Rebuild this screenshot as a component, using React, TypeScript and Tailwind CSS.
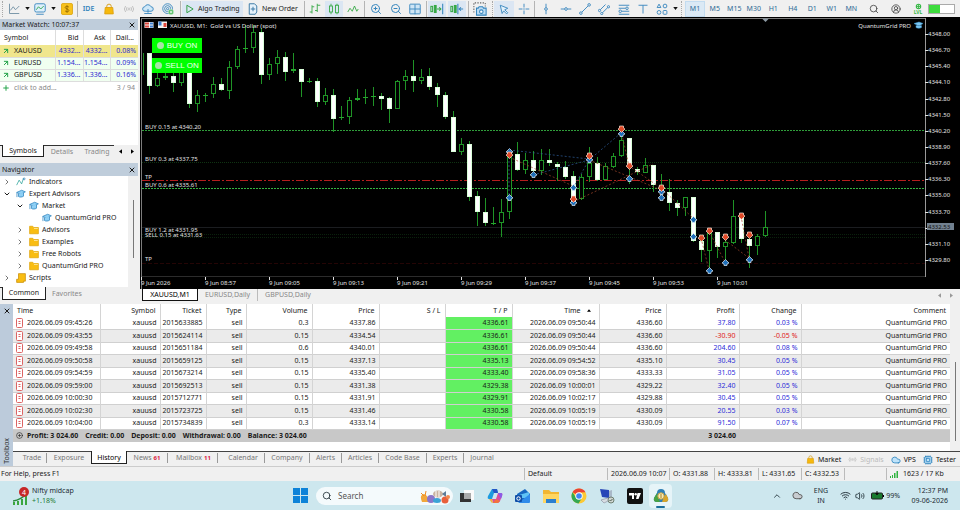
import React from "react";
import {
  ChevronDown, ChevronRight, ChevronUp, CircleUserRound, Cloud,
  Cpu, Search, Volume2, Wifi, X, ZoomIn, ZoomOut, CirclePlus, Plus, ArrowUpRight,
} from "lucide-react";

type Kids = { children?: React.ReactNode };

function Glyph({ children, size = "size-3" }: Kids & { size?: string }) {
  return (
    <svg viewBox="0 0 16 16" className={`${size} shrink-0`} fill="none" stroke="currentColor" strokeWidth="1.2" aria-hidden="true">
      {children}
    </svg>
  );
}

function Tool({ label, w, on, color = "text-[#3585bd]", children }: Kids & { label: string; w: string; on?: boolean; color?: string }) {
  return (
    <button aria-label={label} className={`${w} ${color} ${on ? "bg-[#dbe6f3]" : ""} flex h-4 shrink-0 items-center justify-center`}>
      {children}
    </button>
  );
}

const Sep = ({ w }: { w: string }) => (
  <span className={`${w} flex shrink-0 justify-center`}><span className="h-4 w-px bg-[#b4b4b4]" /></span>
);
const Grip = ({ w }: { w: string }) => (
  <span className={`${w} flex shrink-0 justify-center`}><span className="h-4 border-l border-dotted border-[#a8a8a8]" /></span>
);
const Caret = () => (
  <button aria-label="More options" className="flex h-4 w-[6px] shrink-0 items-center justify-center">
    <svg viewBox="0 0 6 4" className="h-[3px] w-[5px]" aria-hidden="true"><path d="M0 0h6L3 4z" fill="#111" /></svg>
  </button>
);

function Bag({ size = "size-3" }: { size?: string }) {
  return (
    <Glyph size={size}>
      <path d="M5 7V4.500a3 3 0 0 1 6 0V7" stroke="#d49a10" />
      <path d="M3 6h10l.7 8.500H2.300z" fill="#f6b90d" stroke="#dca011" />
    </Glyph>
  );
}
function Signal({ size = "size-3" }: { size?: string }) {
  return (
    <Glyph size={size}>
      <circle cx="8" cy="8" r="1.300" />
      <path d="M5.500 5.500a3.500 3.500 0 0 0 0 5M10.500 5.500a3.500 3.500 0 0 1 0 5M3.500 4a6 6 0 0 0 0 8M12.500 4a6 6 0 0 1 0 8" />
    </Glyph>
  );
}

const timeframes = ["M5", "M15", "M30", "H1", "H4", "D1", "W1", "MN"];

function Toolbar() {
  return (
    <header className="flex h-[17px] items-center bg-[#f0f0f0] text-[8px] leading-4 text-[#222]">
      <Grip w="w-1" />
      <Tool label="Chart type" w="w-5" color="text-[#6f8fa3]">
        <Glyph><path d="M2 1v13h13M3 10l4-5 3 4 5-5" /></Glyph>
      </Tool>
      <Caret />
      <Tool label="Templates" w="w-5">
        <Glyph>
          <rect x="1" y="1" width="14" height="11" rx="2" fill="#dff0fb" />
          <path d="M3 9l3-4 3 3 4-4" stroke="#2da44e" /><path d="M3 15h10" />
        </Glyph>
      </Tool>
      <Caret />
      <Tool label="Deposit" w="w-[21px]">
        <Glyph>
          <rect x="0.600" y="0.600" width="14.800" height="14.800" rx="2" fill="#f8c11c" stroke="#dda714" />
          <path d="M10.500 5.500c-1-1.500-5-1.500-5 .500s5 1.800 5 4-4 2-5 .500M8 3v10" stroke="#966b00" />
        </Glyph>
      </Tool>
      <Sep w="w-px" />
      <Tool label="MetaEditor" w="w-[21px]"><span className="text-[7px] font-semibold">IDE</span></Tool>
      <Tool label="Market" w="w-5"><Bag /></Tool>
      <Tool label="Signals" w="w-[19px]" color="text-[#bdbdbd]"><Signal /></Tool>
      <Tool label="Virtual hosting" w="w-[19px]">
        <Glyph><path d="M5 11H4a3 3 0 0 1-.300-6A4.500 4.500 0 0 1 12 5a3 3 0 0 1 0 6H5" fill="#cfe8f8" /><path d="M8 8v5M3 14h10" /></Glyph>
      </Tool>
      <Tool label="Copy network" w="w-[22px]">
        <Glyph>
          <circle cx="7.500" cy="7.500" r="6.500" /><circle cx="7.500" cy="7.500" r="4" /><circle cx="7.500" cy="7.500" r="1.500" />
          <circle cx="12" cy="12" r="3.600" fill="#39b54a" stroke="#fff" strokeWidth=".6" /><path d="M12 10v4M10 12h4" stroke="#fff" />
        </Glyph>
      </Tool>
      <Sep w="w-[3px]" />
      <button className="flex h-4 w-[61px] shrink-0 items-center gap-[3px] bg-[#dbe6f3] pl-[3px]">
        <Glyph size="size-2.5"><path d="M3 2l10 6-10 6z" stroke="#2a9d3f" strokeWidth="1.500" /></Glyph>
        <span className="whitespace-nowrap text-[7px]">Algo Trading</span>
      </button>
      <button className="flex h-4 w-[60px] shrink-0 items-center gap-[3px] pl-1 text-[7px]">
        <Glyph><path d="M3 1h7l3 3v8l-2 3H3z" fill="#e6f2fb" stroke="#2f6f9f" /><path d="M8 5v6M5 8h6" stroke="#2f6f9f" /></Glyph>
        <span className="whitespace-nowrap">New Order</span>
      </button>
      <Sep w="w-[2px]" />
      <Tool label="Bar chart" w="w-5" color="text-[#35a845]">
        <Glyph><path d="M4 3v11M1 12h3M4 5h3M11 1v11M8 10h3M11 3h4" /></Glyph>
      </Tool>
      <Tool label="Candlesticks" w="w-[18px]" on color="text-[#35a845]">
        <Glyph><rect x="2" y="4" width="4" height="8" /><rect x="10" y="3" width="4" height="10" /><path d="M4 1v3M4 12v3M12 1v2M12 13v2" /></Glyph>
      </Tool>
      <Tool label="Line chart" w="w-5" color="text-[#35a845]"><Glyph><path d="M1 12l3-5 3 4 3-7 3 7 2-3" /></Glyph></Tool>
      <Sep w="w-[3px]" />
      <Tool label="Zoom in" w="w-5"><ZoomIn className="size-3" /></Tool>
      <Tool label="Zoom out" w="w-[19px]"><ZoomOut className="size-3" /></Tool>
      <Tool label="Tile windows" w="w-5">
        <Glyph><rect x="1" y="1.500" width="14" height="13" rx="1" fill="#cfe5f5" /><path d="M8 2v13M1 8h14" /></Glyph>
      </Tool>
      <Sep w="w-[3px]" />
      <Tool label="Auto scroll" w="w-[18px]" on color="text-[#35a845]">
        <Glyph size="size-3.5"><rect x="1" y="5" width="2" height="6" /><rect x="5" y="4" width="2" height="8" fill="#35a845" /><path d="M8 8h4M10.500 6l2 2-2 2" /><path d="M14.500 2v12" stroke="#3585bd" /></Glyph>
      </Tool>
      <span className="w-0.5 shrink-0" />
      <Tool label="Chart shift" w="w-[18px]" on color="text-[#35a845]">
        <Glyph size="size-3.5"><rect x="1" y="5" width="2" height="6" /><rect x="5" y="4" width="2" height="8" fill="#35a845" /><path d="M9 2v12M15 8h-4M12.500 6l-2 2 2 2" stroke="#3585bd" /></Glyph>
      </Tool>
      <Sep w="w-1" />
      <Tool label="Screenshot" w="w-5">
        <Glyph size="size-3.5">
          <path d="M1 12V1h13v4" stroke="#666" strokeDasharray="1.500 1.500" />
          <path d="M4 7h2l1-1.500h4L12 7h3v8H4z" fill="#bcdcf3" /><circle cx="9.500" cy="11" r="2" fill="#fff" />
        </Glyph>
      </Tool>
      <Grip w="w-1" />
      <Tool label="Cursor" w="w-5" on><Glyph><path d="M3 3l10 4-4 2 4 4-1.500 1.500-4-4-2 3.500z" fill="#e3f1fb" /></Glyph></Tool>
      <Tool label="Crosshair" w="w-[19px]"><Glyph><path d="M8 1v5M8 10v5M1 8h5M10 8h5M7 8h2" /></Glyph></Tool>
      <Sep w="w-[3px]" />
      <Tool label="Vertical line" w="w-5"><Glyph><path d="M8 1v5M8 10v5" /><circle cx="8" cy="8" r="1.800" /></Glyph></Tool>
      <Tool label="Horizontal line" w="w-[19px]"><Glyph><path d="M1 8h5M10 8h5" /><circle cx="8" cy="8" r="1.800" /></Glyph></Tool>
      <Tool label="Trend line" w="w-[19px]"><Glyph><path d="M4 12L12 4" /><circle cx="2.500" cy="13.500" r="1.700" /><circle cx="13.500" cy="2.500" r="1.700" /></Glyph></Tool>
      <Tool label="Channel" w="w-5"><Glyph><path d="M3 9l7-7M6 13l7-7" /><circle cx="2" cy="10" r="1.500" /><circle cx="14" cy="5" r="1.500" /><circle cx="5" cy="14" r="1.500" /></Glyph></Tool>
      <Tool label="Fibonacci" w="w-5"><Glyph><path d="M1 3h14M1 7h9M5 11h10M1 15h14" /><circle cx="12" cy="7" r="1.700" /><circle cx="3" cy="11" r="1.700" /></Glyph></Tool>
      <Tool label="Text" w="w-[18px]"><Glyph><path d="M2 3h12M8 3v11" /></Glyph></Tool>
      <Tool label="Shapes" w="w-5">
        <Glyph><path d="M1.500 6L4 1.500 6.500 6z" /><circle cx="12" cy="4" r="2.500" /><rect x="9.500" y="10" width="5" height="5" rx="1" /><circle cx="4" cy="12.500" r="2.500" /></Glyph>
      </Tool>
      <Caret />
      <Grip w="w-[7px]" />
      <button className="h-4 w-5 shrink-0 border border-[#c3dcf0] bg-[#dbe9f5] text-[7px] leading-[14px] text-[#2e6b96]">M1</button>
      <nav aria-label="Timeframes" className="flex w-[156px] shrink-0">
        {timeframes.map((t) => (
          <button key={t} className="flex-1 text-center text-[7px] text-[#2e6b96]">{t}</button>
        ))}
      </nav>
      <div className="ml-auto flex items-center pr-[5px]">
        <Tool label="Search" w="w-5" color="text-[#444]"><Search className="size-[10px]" /></Tool>
        <Tool label="Account" w="w-6" color="text-[#444]"><CircleUserRound className="size-[10px]" /></Tool>
        <Tool label="Level" w="w-5" color="text-[#35b845]">
          <span className="flex flex-col items-center">
            <Glyph size="size-[7px]"><circle cx="8" cy="8" r="5" strokeWidth="2.500" /><path d="M8 3v10M3 8h10" strokeWidth="2" /></Glyph>
            <span className="text-[5px] leading-[5px] font-bold">LVL</span>
          </span>
        </Tool>
        <span className="flex h-[10px] w-[27px] border border-[#aaa] bg-white"><span className="w-[11px] bg-[#3ddc3d]" /></span>
      </div>
    </header>
  );
}

const quotes = [
  { s: "XAUUSD", bid: "4332...", ask: "4332...", d: "0.08%", row: "bg-[#f0e68c]" },
  { s: "EURUSD", bid: "1.154...", ask: "1.154...", d: "0.09%", row: "bg-[#f0fff0]" },
  { s: "GBPUSD", bid: "1.336...", ask: "1.336...", d: "0.16%", row: "bg-[#f0fff0]" },
];

function PanelTitle({ children, h }: Kids & { h: string }) {
  return (
    <div className={`${h} flex shrink-0 items-center justify-between bg-[#bfcddb] pr-0.5 pl-0.5`}>
      <h2 className="leading-none">{children}</h2>
      <button aria-label="Close panel"><X className="size-2" strokeWidth={3} /></button>
    </div>
  );
}

function MarketWatch() {
  return (
    <section className="flex h-[138px] flex-col bg-white">
      <PanelTitle h="h-[11px]">Market Watch: 10:07:37</PanelTitle>
      <table className="w-full table-fixed border-collapse">
        <colgroup><col className="w-[55px]" /><col className="w-7" /><col className="w-[27px]" /><col /></colgroup>
        <thead>
          <tr className="h-[15px]">
            <th className="border-r border-[#ddd] pl-1 text-left font-normal">Symbol</th>
            <th className="border-r border-[#ddd] pr-1 text-right font-normal">Bid</th>
            <th className="border-r border-[#ddd] pr-1 text-right font-normal">Ask</th>
            <th className="pr-1 text-right font-normal">Dail...</th>
          </tr>
        </thead>
        <tbody>
          {quotes.map((q) => (
            <tr key={q.s} className={`${q.row} h-[12px] border-b border-[#ddd] text-[#2b2bd0]`}>
              <td className="border-r border-[#ddd] pl-0.5 text-[#222]">
                <span className="flex items-center gap-1"><ArrowUpRight className="size-2 text-[#24a34a]" strokeWidth={3} />{q.s}</span>
              </td>
              <td className="border-r border-[#ddd] pr-0.5 text-right">{q.bid}</td>
              <td className="border-r border-[#ddd] pr-0.5 text-right">{q.ask}</td>
              <td className="pr-0.5 text-right">{q.d}</td>
            </tr>
          ))}
        </tbody>
      </table>
      <div className="flex h-3 items-center pr-[3px] pl-0.5 text-[#888]">
        <button className="flex items-center gap-1"><Plus className="size-2 text-[#24a34a]" strokeWidth={3} />click to add...</button>
        <span className="ml-auto">3 / 94</span>
      </div>
      <div className="mt-auto flex h-3 items-center bg-[#f0f0f0]">
        <span className="h-full w-0.5 border-t border-[#333]" />
        <button className="h-full w-[42px] border border-t-0 border-[#222] bg-white leading-[11px]">Symbols</button>
        <button className="h-full w-9 border-t border-[#333] leading-[11px] text-[#888]">Details</button>
        <button className="h-full w-[34px] border-t border-[#333] leading-[11px] text-[#888]">Trading</button>
        <button aria-label="Previous tabs" className="flex w-3 justify-center"><svg viewBox="0 0 4 6" className="h-[5px] w-[3px]"><path d="M4 0v6L0 3z" /></svg></button>
        <button aria-label="Next tabs" className="flex w-3 justify-center"><svg viewBox="0 0 4 6" className="h-[5px] w-[3px]"><path d="M0 0v6l4-3z" /></svg></button>
      </div>
    </section>
  );
}

function Cap({ size = "size-[10px]" }: { size?: string }) {
  return (
    <Glyph size={size}>
      <path d="M1 5.500L9 2l6 2.500-7.500 4z" fill="#8fd0f5" stroke="#2d83bd" />
      <path d="M4 7.500V12c2 1.500 6 1 8-.500V6M1.500 6v7" fill="#8fd0f5" stroke="#2d83bd" />
    </Glyph>
  );
}
function Folder() {
  return (
    <Glyph size="size-[10px]">
      <path d="M1 2h5l1.500 2H15v10H1z" fill="#f9bd12" stroke="#e0a50c" /><path d="M8 5.500h6" stroke="#fff2c0" />
    </Glyph>
  );
}

type Node = { t: string; pad: string; open?: boolean; leaf?: boolean; icon: "ind" | "cap" | "dir" | "scr" };
const tree: Node[] = [
  { t: "Indicators", pad: "pl-[3px]", icon: "ind" },
  { t: "Expert Advisors", pad: "pl-[3px]", open: true, icon: "cap" },
  { t: "Market", pad: "pl-4", open: true, icon: "cap" },
  { t: "QuantumGrid PRO", pad: "pl-[29px]", leaf: true, icon: "cap" },
  { t: "Advisors", pad: "pl-4", icon: "dir" },
  { t: "Examples", pad: "pl-4", icon: "dir" },
  { t: "Free Robots", pad: "pl-4", icon: "dir" },
  { t: "QuantumGrid PRO", pad: "pl-4", icon: "dir" },
  { t: "Scripts", pad: "pl-[3px]", icon: "scr" },
];

function Navigator() {
  return (
    <section className="mt-[6px] flex h-[137px] flex-col bg-white">
      <PanelTitle h="h-[13px]">Navigator</PanelTitle>
      <div className="flex flex-1">
        <ul className="flex-1">
          {tree.map((n, i) => (
            <li key={i} className={n.pad}>
              <button className="flex h-3 items-center text-[7px] whitespace-nowrap">
                <span className="flex w-[13px]">
                  {n.leaf ? null : n.open ? <ChevronDown className="size-2" strokeWidth={3} /> : <ChevronRight className="size-2 text-[#777]" strokeWidth={3} />}
                </span>
                {n.icon === "ind" && <Glyph size="size-[10px]"><path d="M1 13l4-8 4 6 3-9" stroke="#2aa198" /><circle cx="13" cy="3" r="1.500" stroke="#3585bd" /></Glyph>}
                {n.icon === "cap" && <Cap />}
                {n.icon === "dir" && <Folder />}
                {n.icon === "scr" && <Glyph size="size-[10px]"><path d="M4 1h11v12h-3v2H1v-5h3z" fill="#f9bd12" stroke="#c98f08" /></Glyph>}
                <span className="pl-[3px]">{n.t}</span>
              </button>
            </li>
          ))}
        </ul>
        <div className="flex w-[10px] justify-center bg-[#f0f0f0] pt-6"><span className="h-[58px] w-px bg-[#777]" /></div>
      </div>
      <div className="flex h-[13px] bg-[#f0f0f0]">
        <span className="w-0.5 border-t border-[#333]" />
        <button className="w-11 border border-t-0 border-[#222] bg-white leading-[12px]">Common</button>
        <button className="w-[42px] leading-[12px] text-[#888]">Favorites</button>
      </div>
    </section>
  );
}

// high, body top, body bottom, low, 1 = falling (filled) candle
const candles: number[][] = [
  [53, 53, 86, 94, 1], [73, 78, 86, 87, 0], [73, 76, 78, 80, 0], [73, 76, 83, 92, 1], [60, 66, 83, 86, 0], [70, 70, 104, 108, 1],
  [90, 95, 104, 112, 0], [93, 95, 96, 102, 0], [77, 84, 94, 98, 0], [78, 84, 90, 91, 1], [61, 67, 91, 99, 0], [46, 49, 67, 69, 0],
  [25, 48, 49, 53, 0], [25, 32, 48, 53, 0], [28, 32, 75, 84, 1], [58, 64, 75, 80, 0], [50, 57, 64, 74, 0], [52, 57, 72, 81, 1],
  [53, 69, 71, 73, 0], [69, 69, 82, 97, 1], [78, 81, 82, 83, 0], [78, 81, 102, 107, 1], [88, 95, 102, 105, 0], [89, 95, 119, 132, 1],
  [106, 117, 118, 120, 0], [97, 100, 117, 124, 0], [89, 98, 100, 101, 0], [89, 97, 98, 104, 0], [87, 96, 97, 106, 0],
  [93, 96, 99, 110, 1], [97, 98, 109, 123, 1], [80, 81, 109, 109, 0], [70, 76, 81, 90, 0], [60, 76, 81, 92, 1], [69, 77, 81, 84, 0],
  [68, 76, 87, 90, 1], [83, 87, 95, 107, 1], [92, 95, 117, 119, 1], [111, 117, 152, 152, 1], [138, 144, 152, 155, 0],
  [141, 144, 197, 201, 1], [191, 196, 212, 226, 1], [198, 212, 223, 226, 1], [207, 223, 224, 225, 0], [199, 212, 223, 237, 0],
  [153, 157, 212, 219, 0], [142, 154, 170, 171, 1], [153, 160, 170, 174, 0], [151, 160, 171, 175, 1], [149, 160, 171, 175, 0],
  [149, 160, 163, 166, 1], [162, 164, 167, 181, 1], [161, 167, 177, 179, 1], [171, 176, 202, 203, 1], [174, 177, 199, 200, 0],
  [147, 163, 177, 182, 0], [157, 163, 180, 181, 1], [163, 166, 180, 180, 0], [153, 156, 167, 168, 0], [133, 140, 156, 157, 0],
  [138, 138, 164, 184, 1], [167, 169, 172, 175, 1], [158, 165, 173, 173, 0], [165, 165, 185, 192, 1], [174, 187, 192, 200, 1],
  [179, 192, 203, 211, 1], [200, 203, 208, 216, 1], [197, 197, 208, 216, 0], [197, 197, 241, 242, 1], [237, 241, 250, 262, 1],
  [230, 233, 251, 268, 0], [232, 232, 247, 258, 1], [235, 242, 247, 263, 0], [200, 216, 243, 244, 0], [215, 215, 239, 243, 1],
  [235, 239, 246, 268, 1], [234, 236, 246, 255, 0], [211, 227, 236, 237, 0],
];

const buys = [[509, 152], [509, 198], [533, 175], [573, 188], [573, 203], [589, 160], [621, 134], [629, 179], [661, 192], [661, 198], [693, 220], [693, 237], [709, 271], [725, 263], [749, 260]];
const sells = [[509, 155], [573, 199], [589, 156], [621, 129], [629, 166], [661, 188], [701, 238], [709, 231], [725, 237], [741, 216], [749, 235]];
// the blank entry is the grid price covered by the current-price tag
const prices = ["4348.00", "4346.70", "4345.40", "4344.10", "4342.80", "4341.50", "4340.20", "4338.90", "4337.60", "4336.30", "4335.00", "4333.70", "", "4331.10", "4329.80"];
const times = ["9 Jun 2026", "9 Jun 08:57", "9 Jun 09:05", "9 Jun 09:13", "9 Jun 09:21", "9 Jun 09:29", "9 Jun 09:37", "9 Jun 09:45", "9 Jun 09:53", "9 Jun 10:01"];
const levels: [number, string][] = [[129, "BUY 0.15 at 4340.20"], [161, "BUY 0.3 at 4337.75"], [179, "TP"], [187, "BUY 0.6 at 4335.61"], [232, "BUY 1.2 at 4331.95"], [237, "SELL 0.15 at 4331.63"], [261, "TP"]];

function Chart() {
  return (
    <div className="relative h-[272px] bg-black">
      <svg viewBox="140 17 820 272" preserveAspectRatio="xMinYMin meet" className="h-full w-full" fontSize="6" fill="#e2e2e2" role="img" aria-label="XAUUSD M1 candlestick chart">
        <g shapeRendering="crispEdges" fill="none">
          <path d="M141.500 289V18.500H925.500" stroke="#7c7c7c" />
          <path d="M925.500 18v259" stroke="#999" />
          <path d="M142 276.500H925" stroke="#2c2c2c" />
          <path d="M142 130.500H925" stroke="#2f9e3a" strokeDasharray="2 1" />
          <path d="M142 162.500H925" stroke="#0f3312" strokeDasharray="1 1" />
          <path d="M142 180.500H925" stroke="#b51e1e" strokeDasharray="8 2 2 2" />
          <path d="M142 188.500H925" stroke="#35b541" strokeDasharray="2 1" />
          <path d="M142 227.500H925" stroke="#1b1d20" />
          <path d="M142 234.500H925M142 237.500H925" stroke="#0a210c" strokeDasharray="1 1" />
          <path d="M142 263.500H925" stroke="#240505" strokeDasharray="4 2" />
        </g>
        <g shapeRendering="crispEdges">
          <path d="M142.500 53.500h1v21h-1" fill="none" stroke="#1c8f22" />
          {candles.map(([hi, top, bot, lo, down], i) => {
            const x = 149 + i * 8;
            return (
              <g key={i}>
                <rect x={x} y={hi} width="1" height={lo - hi} fill="#1f9426" />
                {bot - top < 3 && !down ? (
                  <rect x={x - 2} y={top} width="5" height={bot - top} fill="#25a82d" />
                ) : (
                  <rect x={x - 1.5} y={top + 0.5} width="4" height={bot - top - 1} fill={down ? "#fff" : "#000"} stroke={down ? "#d9ffd9" : "#1f9426"} />
                )}
              </g>
            );
          })}
        </g>
        <g fill="none" strokeDasharray="2 2" strokeWidth="0.700">
          <path d="M509 150L589 159M533 175L589 160M573 188L589 160L621 133M509 157V198" stroke="#2f5f9c" />
          <path d="M509 157L573 186M573 202L653 164M589 160L661 190M621 130L629 166L661 188L693 218M701 238L709 270M709 231L725 262M725 240L749 258M741 216L749 258" stroke="#a5482c" />
        </g>
        {buys.map(([x, y], i) => (
          <path key={i} d={`M${x + 0.5} ${y - 3.5}l3.500 3.500l-2 1v1.500h-3v-1.500l-2-1z`} fill="#1f6fb8" stroke="#dcecf8" strokeWidth="0.700" />
        ))}
        {sells.map(([x, y], i) => (
          <path key={i} d={`M${x + 0.5} ${y + 3.5}l3.500-3.500l-1.500-1v-2h-4v2l-1.500 1z`} fill="#e04a28" stroke="#fbe2d4" strokeWidth="0.700" />
        ))}
        <path d="M762 18.500h7l-3.500 3.500z" fill="#8f9ba6" />
        <rect x="144.500" y="22" width="9" height="6" fill="#f3f3f3" />
        <path d="M145 22.500h4v2h-4zM145 25.500h4v2h-4z" fill="#e0483c" /><path d="M150 22.500h3v2h-3zM150 25.500h3v2h-3z" fill="#3c7ed0" />
        <rect x="158" y="21.500" width="9" height="6.500" fill="#f3f3f3" />
        <path d="M158.500 21.500h3v4h-3z" fill="#3c7ed0" /><path d="M163.500 23h3v4h-3z" fill="#e0483c" />
        <text x="170" y="27.500" xmlSpace="preserve">XAUUSD, M1:  Gold vs US Dollar (spot)</text>
        <text x="911" y="27.500" textAnchor="end">QuantumGrid PRO</text>
        <path d="M914 23.500l5-1.500 4 1.500-4 2.500zM916 25.500v2c1.500 1 4 1 5.500 0v-2" fill="#7cc6f2" stroke="#3b9bd6" strokeWidth="0.500" />
        {levels.map(([y, t]) => <text key={y} x="145" y={y}>{t}</text>)}
        {prices.map((p, i) => {
          const y = 34 + Math.round(i * 16.14);
          return (
            <g key={i}>
              <rect x="925" y={y} width="3" height="1" />
              {p && <text x="928" y={y + 2}>{p}</text>}
            </g>
          );
        })}
        <rect x="927" y="223" width="27" height="7" fill="#71808f" />
        <text x="928" y="229" fill="#111">4332.53</text>
        {times.map((t, i) => (
          <g key={t}>
            <rect x={141 + i * 64} y="277" width="1" height="3" />
            <text x={141 + i * 64} y="285">{t}</text>
          </g>
        ))}
      </svg>
      <div className="absolute top-[21px] left-3 flex flex-col gap-[5px] font-['Liberation_Sans',Arial,sans-serif] text-[8px] text-[#f0fff0]">
        <button className="flex h-[15px] w-[50px] items-center justify-center gap-[3px] bg-[#00ff00]"><span className="size-[7px] rounded-full bg-[#a6e5a6]" />BUY ON</button>
        <button className="flex h-[15px] w-[50px] items-center justify-center gap-[3px] bg-[#00ff00]"><span className="size-[7px] rounded-full bg-[#a6e5a6]" />SELL ON</button>
      </div>
    </div>
  );
}

const deals: string[][] = [
  ["2026.06.09 09:45:26", "2015633885", "0.3", "4337.86", "4336.61", "2026.06.09 09:50:44", "4336.60", "37.80", "0.03 %"],
  ["2026.06.09 09:43:55", "2015624114", "0.15", "4334.54", "4336.61", "2026.06.09 09:50:44", "4336.60", "-30.90", "-0.05 %"],
  ["2026.06.09 09:49:58", "2015651184", "0.6", "4340.01", "4336.61", "2026.06.09 09:50:44", "4336.60", "204.60", "0.08 %"],
  ["2026.06.09 09:50:58", "2015659125", "0.15", "4337.13", "4335.13", "2026.06.09 09:54:52", "4335.10", "30.45", "0.05 %"],
  ["2026.06.09 09:54:59", "2015673214", "0.15", "4335.40", "4333.40", "2026.06.09 09:58:36", "4333.33", "31.05", "0.05 %"],
  ["2026.06.09 09:59:00", "2015692513", "0.15", "4331.38", "4329.38", "2026.06.09 10:00:01", "4329.22", "32.40", "0.05 %"],
  ["2026.06.09 10:00:30", "2015712771", "0.15", "4331.91", "4329.91", "2026.06.09 10:02:17", "4329.88", "30.45", "0.05 %"],
  ["2026.06.09 10:02:30", "2015723725", "0.15", "4331.46", "4330.58", "2026.06.09 10:05:19", "4330.09", "20.55", "0.03 %"],
  ["2026.06.09 10:04:00", "2015734839", "0.3", "4333.14", "4330.58", "2026.06.09 10:05:19", "4330.09", "91.50", "0.07 %"],
];
const totals = ["Profit: 3 024.60", "Credit: 0.00", "Deposit: 0.00", "Withdrawal: 0.00", "Balance: 3 024.60"];
const heads = ["Symbol", "Ticket", "Type", "Volume", "Price", "S / L", "T / P", "Time", "Price", "Profit", "Change", "Comment"];
const cell = "border-r border-[#d4d4d4] pr-[3px] text-right";

function History() {
  return (
    <table className="w-full table-fixed border-collapse whitespace-nowrap">
      <colgroup>
        <col className="w-[87px]" /><col className="w-[60px]" /><col className="w-[46px]" /><col className="w-10" /><col className="w-[66px]" />
        <col className="w-[67px]" /><col className="w-[66px]" /><col className="w-[67px]" /><col className="w-[87px]" /><col className="w-[67px]" />
        <col className="w-[73px]" /><col className="w-[62px]" /><col />
      </colgroup>
      <thead>
        <tr className="h-[13px]">
          <th className="border-r border-[#d4d4d4] pl-1 text-left font-normal">Time</th>
          {heads.map((h, i) => (
            <th key={i} className="border-r border-[#d4d4d4] pr-1 text-right font-normal last:border-r-0">
              {h === "Time" ? (
                <span className="flex items-center justify-end gap-[6px] pr-1">Time<svg viewBox="0 0 6 4" className="h-[3px] w-1"><path d="M0 4h6L3 0z" /></svg></span>
              ) : h}
            </th>
          ))}
        </tr>
      </thead>
      <tbody>
        {deals.map((d) => {
          const tone = d[7].startsWith("-") ? "text-[#e02020]" : "text-[#2b2bd8]";
          return (
            <tr key={d[1]} className="h-[12px] border-b border-[#d0d0d0] even:h-[13px] even:bg-[#ebebeb]">
              <td className="border-r border-[#d4d4d4] pl-[3px]">
                <span className="flex items-center gap-[4px]">
                  <svg viewBox="0 0 7 10" className="h-[10px] w-[7px]" fill="#fff" stroke="#dc6464" strokeWidth="1"><rect x="0.500" y="0.500" width="6" height="9" rx="1" /><path d="M2.500 3.500h2M2.500 5.500h2" /></svg>
                  {d[0]}
                </span>
              </td>
              <td className={cell}>xauusd</td>
              <td className={cell}>{d[1]}</td>
              <td className={cell}>sell</td>
              <td className={cell}>{d[2]}</td>
              <td className={cell}>{d[3]}</td>
              <td className={cell} />
              <td className={`${cell} bg-[#62f062]`}>{d[4]}</td>
              <td className={cell}>{d[5]}</td>
              <td className={cell}>{d[6]}</td>
              <td className={`${cell} ${tone}`}>{d[7]}</td>
              <td className={`${cell} ${tone}`}>{d[8]}</td>
              <td className="pr-[3px] text-right">QuantumGrid PRO</td>
            </tr>
          );
        })}
      </tbody>
      <tfoot>
        <tr className="h-[13px] bg-[#c8c8c8] font-bold">
          <td colSpan={10} className="pl-[3px]">
            <span className="flex items-center gap-1">
              <CirclePlus className="size-[7px]" />
              <span className="flex gap-[7px]">{totals.map((t) => <span key={t}>{t}</span>)}</span>
            </span>
          </td>
          <td className="pr-[3px] text-right">3 024.60</td>
          <td colSpan={2} />
        </tr>
      </tfoot>
    </table>
  );
}

const tabs: [string, string, string?][] = [
  ["Trade", "w-[34px] pl-[5px]"], ["Exposure", "w-11"], ["History", "w-9"], ["News", "w-[43px] pr-[2px]", "61"], ["Mailbox", "w-[52px] pr-[4px]", "11"],
  ["Calendar", "w-[43px]"], ["Company", "w-[45px]"], ["Alerts", "w-8"], ["Articles", "w-[37px]"], ["Code Base", "w-12"],
  ["Experts", "w-[37px]"], ["Journal", "w-9"],
];

function Toolbox() {
  return (
    <section className="flex h-[162px] bg-white">
      <div className="flex w-[13px] shrink-0 flex-col items-center justify-between bg-[#bccbdb] pt-[3px] pb-[2px]">
        <button aria-label="Close toolbox"><X className="size-2" strokeWidth={3} /></button>
        <span className="rotate-180 leading-none text-[#333] [writing-mode:vertical-rl]">Toolbox</span>
      </div>
      <div className="flex min-w-0 flex-1 flex-col">
        <div className="flex">
          <div className="min-w-0 flex-1"><History /></div>
          <div className="flex h-[147px] w-[10px] justify-center bg-[#f0f0f0] pt-[58px]"><span className="h-[79px] w-px bg-[#777]" /></div>
        </div>
        <div className="flex h-[15px] border-t border-[#444] bg-[#f0f0f0] text-[#777]">
          {tabs.map(([t, w, n]) =>
            t === "History" ? (
              <button key={t} className={`${w} -mt-px h-[13px] border border-t-0 border-[#222] bg-white pt-px text-black`}>{t}</button>
            ) : (
              <button key={t} className={`${w} flex h-3 items-center justify-center`}>
                <span className="flex-1 text-center">
                  {t}{n && <span className="pl-0.5 align-bottom text-[6px] font-bold text-[#dc2040]">{n}</span>}
                </span>
                {t !== "Exposure" && t !== "Journal" && <span className="h-[10px] w-px bg-[#999]" />}
              </button>
            ),
          )}
          <div className="ml-auto flex items-center gap-[7px] pt-px pr-1 text-[#111]">
            <button className="flex items-center gap-[3px]"><Bag size="size-[9px]" />Market</button>
            <button className="flex items-center gap-[3px] text-[#bbb]"><Signal size="size-[9px]" />Signals</button>
            <button className="flex items-center gap-[3px]"><Cloud className="size-[10px] fill-[#bfe3fa] text-[#2d83bd]" />VPS</button>
            <button className="flex items-center gap-[3px]"><Cpu className="size-[10px] fill-[#bfe3fa] text-[#2d83bd]" />Tester</button>
          </div>
        </div>
      </div>
    </section>
  );
}

function StatusBar() {
  const part = "flex h-3 items-center border-l border-[#bbb] pl-[3px]";
  return (
    <footer className="flex h-[15px] items-center border-t border-[#ccc] bg-[#f0f0f0] whitespace-nowrap text-[#222]">
      <span className="flex-1 pl-px">For Help, press F1</span>
      <span className={`${part} w-[83px]`}>Default</span>
      <span className={`${part} w-[62px]`}>2026.06.09 10:07</span>
      <span className={`${part} w-[45px]`}>O: 4331.88</span>
      <span className={`${part} w-11`}>H: 4333.81</span>
      <span className={`${part} w-[43px]`}>L: 4331.65</span>
      <span className={`${part} w-[43px]`}>C: 4332.53</span>
      <span className={`${part} w-[42px]`} />
      <span className={`${part} w-[74px] gap-[5px]`}>
        <svg viewBox="0 0 8 7" className="h-[7px] w-2" fill="#2eb33e"><path d="M0 5h1v2H0zM2 4h1v3H2zM4 2h1.500v5H4zM6.500 0H8v7H6.500z" /></svg>
        1623 / 17 Kb
      </span>
    </footer>
  );
}

function TaskIcon({ label, children }: Kids & { label: string }) {
  return <button aria-label={label} className="flex w-7 justify-center">{children}</button>;
}

function Taskbar() {
  return (
    <div className="flex h-[29px] items-center bg-[#cde7ee] text-[#1c2b33]">
      <button className="flex w-[288px] items-center gap-[3px] pl-[13px] text-left">
        <svg viewBox="0 0 16 20" className="h-5 w-4" aria-hidden="true">
          <path d="M0 15q8-1 14-8" stroke="#2b8a3e" strokeWidth="1.500" fill="none" />
          <path d="M0 16h2v3H0zM4 15h2v4H4zM8 13h2v6H8zM12 10h2v9h-2z" fill="#3aa63f" />
          <circle cx="11" cy="6" r="5" fill="#c62828" />
          <text x="11" y="8.500" fontSize="7" textAnchor="middle" fill="#fff">4</text>
        </svg>
        <span className="leading-[10px]">Nifty midcap<br /><span className="text-[#1c7a35]">+1.18%</span></span>
      </button>
      <button aria-label="Start" className="flex w-6 justify-center">
        <svg viewBox="0 0 15 15" className="size-[15px]"><path d="M0 0h7v7H0zM8 0h7v7H8zM0 8h7v7H0zM8 8h7v7H8z" fill="#0e83d8" /></svg>
      </button>
      <div className="ml-1 flex h-[18px] w-[137px] items-center rounded-full bg-[#f4fafc] pr-[3px] pl-[6px]">
        <Search className="size-[10px] shrink-0" />
        <input aria-label="Search" placeholder="Search" className="ml-[6px] w-0 flex-1 bg-transparent text-[8px] outline-none placeholder:text-[#555]" />
        <svg viewBox="0 0 30 16" className="h-4 w-[30px] shrink-0" aria-hidden="true">
          <path d="M2 14q-3-7 2-8 4 1 5 8z" fill="#f2a83b" /><path d="M1 5l3 3M6 3l-1 5" stroke="#ef8b1f" />
          <circle cx="11" cy="11" r="4" fill="#8b76c9" /><ellipse cx="18" cy="6" rx="5" ry="3.500" fill="#c9b3a0" />
          <path d="M16 3v6M19 3v6" stroke="#fff" /><path d="M22 6l4-3v6z" fill="#5b7c99" />
          <ellipse cx="17" cy="12.500" rx="4" ry="2.500" fill="#3ba3d6" /><circle cx="25" cy="12" r="3.500" fill="#e8603c" /><circle cx="28" cy="9" r="2" fill="#f1894f" />
        </svg>
      </div>
      <div className="flex items-center">
        <TaskIcon label="Task view"><svg viewBox="0 0 14 14" className="size-[14px]"><rect x="4" y="1" width="10" height="10" fill="#fafafa" /><rect x="0" y="4" width="11" height="9" fill="#333" /><rect x="4" y="4" width="7" height="6" fill="#aaa" /></svg></TaskIcon>
        <TaskIcon label="Copilot">
          <svg viewBox="0 0 16 16" className="size-4"><path d="M5 1h5l1 4H7L5 11H2Q0 11 1 8z" fill="#1c9be0" /><path d="M5 1h5l1 4H7z" fill="#2457c5" /><path d="M11 5h3q2 0 1 3l-2 5q-1 2-3 2H6l-1-4h4z" fill="#d74ca0" /><path d="M2 11h3l1 4q-2 0-2.500-2z" fill="#f4b23a" /><path d="M11 5h3q2 0 1 3l-1 3z" fill="#8b5be8" /><path d="M9 11l-3 4h4q2 0 3-2z" fill="#f3733b" /></svg>
        </TaskIcon>
        <TaskIcon label="Outlook">
          <svg viewBox="0 0 16 16" className="size-4"><path d="M2 6l8-5 5 5v8H3z" fill="#1767c0" /><path d="M4 7l10-3v6H4z" fill="#5fc3f5" /><path d="M3 15l12-9v8q0 1-1 1z" fill="#2f8bea" /><rect x="0" y="7" width="7" height="7" rx="1" fill="#0f4fa8" /><circle cx="3.500" cy="10.500" r="1.700" fill="none" stroke="#fff" /></svg>
        </TaskIcon>
        <TaskIcon label="File Explorer">
          <svg viewBox="0 0 16 16" className="size-4"><path d="M0 2h6l2 2h8v10H0z" fill="#f2b632" /><path d="M0 6h16v9H0z" fill="#ffd661" /><path d="M3 11h10v4H3z" fill="#2b7fd0" /></svg>
        </TaskIcon>
        <TaskIcon label="Chrome">
          <svg viewBox="0 0 16 16" className="size-4"><circle cx="8" cy="8" r="7.500" fill="#fcc934" /><path d="M8 8L1.500 4.200A7.500 7.500 0 0 1 14.500 4.200L8 4.500z" fill="#ea4335" /><path d="M1.500 4.200A7.500 7.500 0 0 0 7.500 15.500L11 10 8 8 5 9.500z" fill="#34a853" /><circle cx="8" cy="8" r="3.700" fill="#fff" /><circle cx="8" cy="8" r="2.800" fill="#4285f4" /></svg>
        </TaskIcon>
        <TaskIcon label="Remote desktop">
          <svg viewBox="0 0 16 16" className="size-4"><path d="M1 1l9 1v8L3 9z" fill="#2746b8" /><path d="M10 3l3-1v7l-3 1z" fill="#a9b8c8" /><path d="M2 12l7-2 2 2-6 3z" fill="#d7dde3" stroke="#778" strokeWidth=".5" /><circle cx="12" cy="12" r="3" fill="#cfd6d2" stroke="#6f7f72" /><path d="M10.500 12l1 1 2-2" stroke="#4d5d50" fill="none" /></svg>
        </TaskIcon>
        <TaskIcon label="TradingView">
          <svg viewBox="0 0 16 16" className="size-4"><rect width="16" height="16" rx="2" fill="#111" /><path d="M2 5h5v6H5V7.500H2zM10.500 5H14l-2.500 6H9z" fill="#fff" /><circle cx="8.700" cy="6.200" r="1.200" fill="#fff" /></svg>
        </TaskIcon>
        <button aria-label="MetaTrader 5" className="flex h-6 w-[23px] flex-col items-center justify-between rounded bg-[#e6f4f8] pt-[4px]">
          <svg viewBox="0 0 16 16" className="size-4"><path d="M8 1q4 0 4 4l3 5q1 4-3 4H4q-4 0-3-4l3-5q0-4 4-4z" fill="#2f7fb5" /><path d="M4 5L1 10q-1 4 3 4h3L5 9z" fill="#47a244" /><path d="M12 14q4 0 3-4l-2-4-2 3-2 5z" fill="#d9a52a" /><circle cx="8" cy="8" r="3.200" fill="#f5e9b8" stroke="#c9a03a" /><path d="M8 6v4" stroke="#a8801e" /></svg>
          <span className="h-0.5 w-[9px] rounded bg-[#1b6f9c]" />
        </button>
      </div>
      <div className="ml-auto flex items-center pr-3">
        <button aria-label="Hidden icons" className="flex w-5 justify-center"><ChevronUp className="size-[10px]" /></button>
        <button aria-label="Weather" className="flex w-5 justify-center"><Cloud className="size-[11px] fill-[#c8ccd0] text-[#555]" /></button>
        <button className="w-7 text-center leading-[10px]">ENG<br />IN</button>
        <button aria-label="Network" className="flex w-5 justify-center"><Wifi className="size-[11px]" /></button>
        <button aria-label="Volume" className="flex w-[10px] justify-center"><Volume2 className="size-[10px]" /></button>
        <button className="flex w-[35px] items-center justify-end gap-0.5">
          <svg viewBox="0 0 13 9" className="h-[9px] w-[13px]"><rect x="0.500" y="2" width="11" height="6" rx="1" fill="#187a2e" stroke="#222" /><path d="M12 4h1v2h-1z" /><path d="M6 0v4M4.500 2L6 4l1.500-2" stroke="#111" /></svg>
          99%
        </button>
        <button className="w-12 text-right leading-[10px]">12:37 PM<br />09-06-2026</button>
      </div>
    </div>
  );
}

export default function App() {
  return (
    <div className="flex min-h-screen flex-col bg-[#f0f0f0] font-['Noto_Sans','Open_Sans',sans-serif] text-[7px] leading-[10px] text-[#1a1a1a]">
      <Toolbar />
      <main className="flex flex-col">
        <div className="flex">
          <aside className="w-[138px] shrink-0 pt-0.5"><MarketWatch /><Navigator /></aside>
          <div className="ml-0.5 flex min-w-0 flex-1 flex-col">
            <Chart />
            <div className="flex h-[15px] items-start pl-0.5 text-[#888]">
              <button className="h-3 w-14 border border-t-0 border-[#111] bg-white text-black">XAUUSD,M1</button>
              <button className="h-3 w-[60px] border-r border-[#bbb]">EURUSD,Daily</button>
              <button className="h-3 w-[60px]">GBPUSD,Daily</button>
              <span className="ml-auto flex gap-[9px] pt-1 pr-[7px]">
                <svg viewBox="0 0 4 6" className="h-[5px] w-[3px]" fill="#999"><path d="M4 0v6L0 3z" /></svg>
                <svg viewBox="0 0 4 6" className="h-[5px] w-[3px]" fill="#999"><path d="M0 0v6l4-3z" /></svg>
              </span>
            </div>
          </div>
        </div>
        <Toolbox />
      </main>
      <StatusBar />
      <Taskbar />
    </div>
  );
}
